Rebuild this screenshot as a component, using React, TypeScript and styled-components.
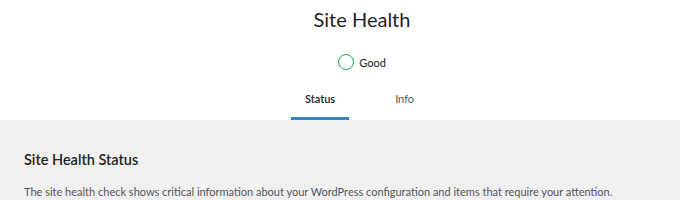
import React from "react";
import styled, { createGlobalStyle } from "styled-components";

const Global = createGlobalStyle`
  html, body { margin: 0; padding: 0; background: #f0f0f0; }
  body { font-family: "Segoe UI", Lato, sans-serif; color: #1d2327; }
`;

const Header = styled.div`
  background: #fff;
  display: flex;
  flex-direction: column;
  align-items: center;
  padding-left: 44px;
`;

const Title = styled.h1`
  margin: 0;
  padding-top: 7px;
  font-size: 20px;
  font-weight: 400;
  line-height: 24px;
  color: #1d2327;
`;

const Rating = styled.div`
  display: flex;
  align-items: center;
  gap: 5px;
  margin-top: 23px;
  height: 16px;
  font-size: 11px;
  line-height: 16px;
  color: #1d2327;
`;

const Label = styled.span`
  padding-top: 2px;
`;

const Circle = styled.span`
  width: 16px;
  height: 16px;
  box-sizing: border-box;
  border-radius: 50%;
  border: 1.5px solid #1ea84a;
`;

const Tabs = styled.nav`
  display: flex;
  gap: 32px;
  margin-right: 5px;
`;

const Tab = styled.a<{ $active?: boolean }>`
  display: block;
  padding: 21px 14px 10px;
  line-height: 16px;
  font-size: 11px;
  text-decoration: none;
  color: ${(p) => (p.$active ? "#1d2327" : "#50575e")};
  border-bottom: 3px solid ${(p) => (p.$active ? "#3582c4" : "transparent")};
  font-weight: ${(p) => (p.$active ? 600 : 400)};
`;

const Body = styled.main`
  padding: 30px 24px 0;
`;

const H2 = styled.h2`
  margin: 0;
  font-size: 14.5px;
  font-weight: 600;
  line-height: 20px;
  color: #1d2327;
`;

const P = styled.p`
  margin: 14px 0 0;
  font-size: 11px;
  line-height: 16px;
  color: #50575e;
`;

export default function App() {
  return (
    <>
      <Global />
      <Header>
        <Title>Site Health</Title>
        <Rating>
          <Circle />
          <Label>Good</Label>
        </Rating>
        <Tabs>
          <Tab $active>Status</Tab>
          <Tab>Info</Tab>
        </Tabs>
      </Header>
      <Body>
        <H2>Site Health Status</H2>
        <P>
          The site health check shows critical information about your WordPress configuration and items that require your attention.
        </P>
      </Body>
    </>
  );
}
